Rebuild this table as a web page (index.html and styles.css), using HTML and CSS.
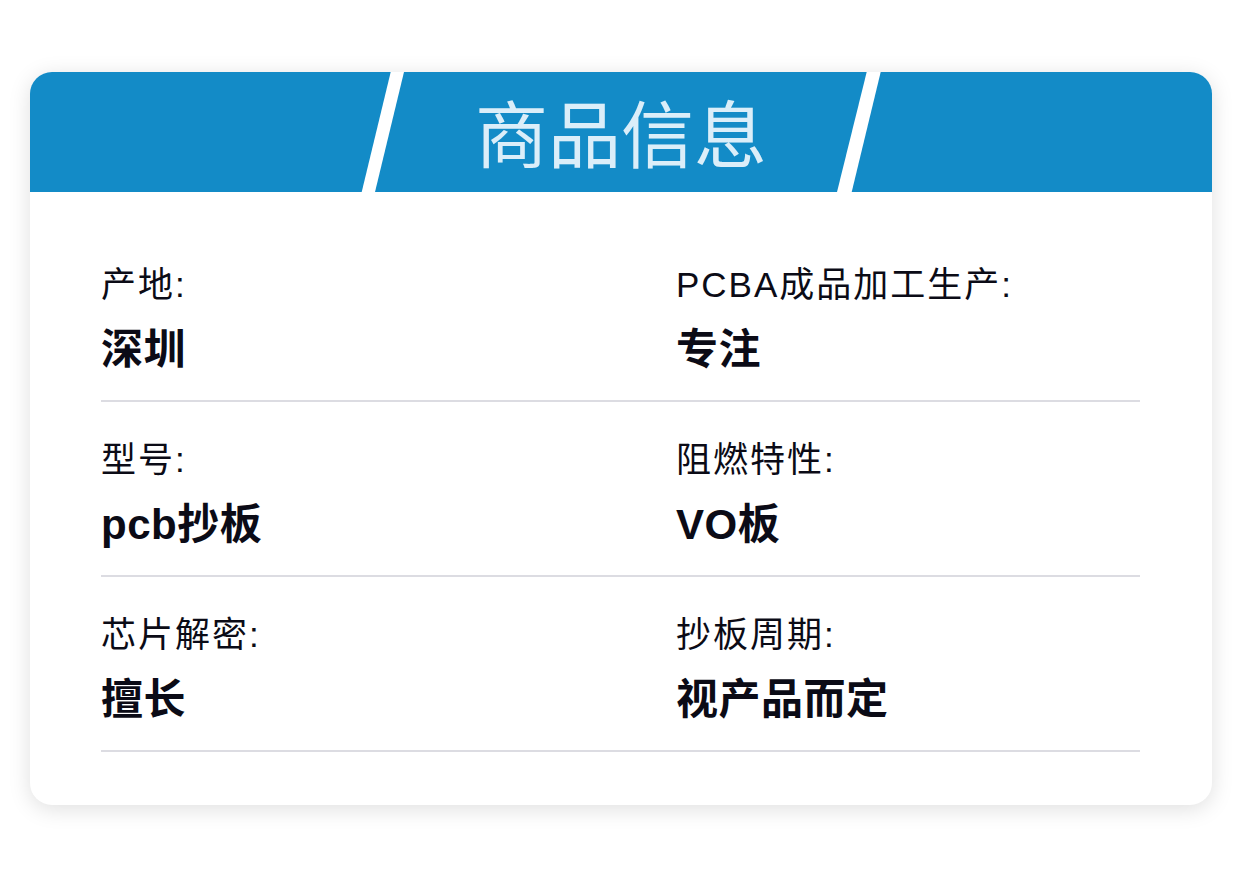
FILE: index.html
```html
<!DOCTYPE html>
<html lang="zh-CN">
<head>
<meta charset="utf-8">
<title>商品信息</title>
<link rel="stylesheet" href="styles.css">
</head>
<body>
<div class="page">
  <div class="card">
    <div class="header">
      <svg class="slashes" width="1182" height="120" viewBox="0 0 1182 120" aria-hidden="true">
        <polygon points="360.7,0 374,0 345,120 331.7,120" fill="#ffffff"/>
        <polygon points="836.7,0 850.7,0 821.7,120 807,120" fill="#ffffff"/>
      </svg>
      <h1 class="title">商品信息</h1>
    </div>
    <div class="body">
      <div class="row">
        <div class="cell"><div class="label">产地:</div><div class="value">深圳</div></div>
        <div class="cell"><div class="label">PCBA成品加工生产:</div><div class="value">专注</div></div>
      </div>
      <div class="row">
        <div class="cell"><div class="label">型号:</div><div class="value">pcb抄板</div></div>
        <div class="cell"><div class="label">阻燃特性:</div><div class="value">VO板</div></div>
      </div>
      <div class="row">
        <div class="cell"><div class="label">芯片解密:</div><div class="value">擅长</div></div>
        <div class="cell"><div class="label">抄板周期:</div><div class="value">视产品而定</div></div>
      </div>
    </div>
  </div>
</div>
</body>
</html>
```
FILE: styles.css
```css
html, body {
  margin: 0;
  padding: 0;
  background: #ffffff;
}
body {
  font-family: "Liberation Sans", "Noto Sans CJK SC", sans-serif;
  color: #0b0b16;
}
.page {
  padding: 72px 30px 72px 30px;
}
.card {
  width: 1182px;
  height: 733px;
  background: #ffffff;
  border-radius: 22px;
  box-shadow: 0 4px 22px rgba(0, 0, 0, 0.13);
  overflow: hidden;
}
.header {
  position: relative;
  height: 120px;
  background: #138bc7;
  display: flex;
  align-items: center;
  justify-content: center;
}
.slashes {
  position: absolute;
  left: 0;
  top: 0;
}
.title {
  position: relative;
  margin: 0 0 4px 0;
  font-family: "Noto Sans CJK SC", sans-serif;
  font-weight: 400;
  font-size: 73px;
  line-height: 1;
  color: #dbeef9;
}
.body {
  padding: 35px 72px 0 71px;
}
.row {
  display: grid;
  grid-template-columns: 575px 1fr;
  padding: 39px 0 26px 0;
  border-bottom: 2px solid #dcdce2;
}
.cell {
  display: flex;
  flex-direction: column;
  gap: 22px;
}
.label {
  font-size: 35px;
  line-height: 38px;
  font-weight: 400;
  letter-spacing: 2px;
}
.value {
  font-size: 42px;
  line-height: 48px;
  font-weight: 700;
  letter-spacing: 0.5px;
}
```
